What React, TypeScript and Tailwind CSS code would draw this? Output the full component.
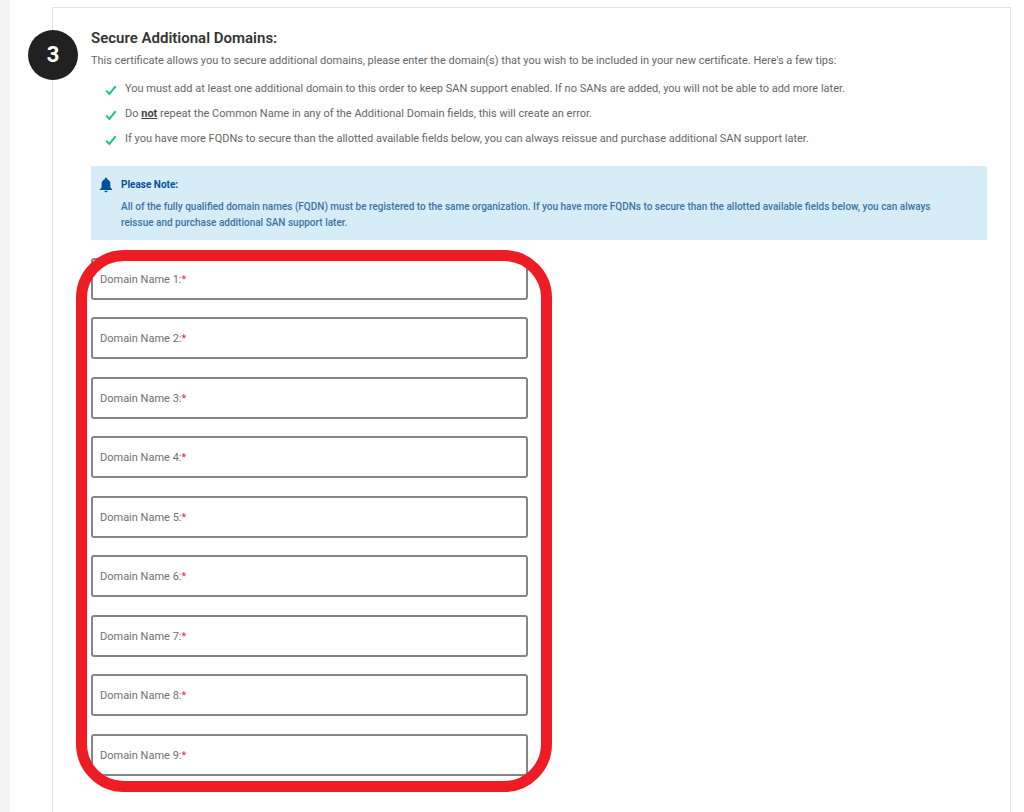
import { useState } from 'react';
import type { ReactNode } from 'react';

const DOMAIN_COUNT = 9;

function CheckIcon() {
  return (
    <svg viewBox="0 0 12 12" className="mt-[3px] h-3 w-3 shrink-0" fill="none" aria-hidden="true">
      <path d="M1.200 6.600 4.400 9.900 10.700 2.200" stroke="#1fbf92" strokeWidth="2" />
    </svg>
  );
}

function BellIcon() {
  return (
    <svg viewBox="0 0 14 16" className="h-4 w-[14px] shrink-0" fill="#07509c" aria-hidden="true">
      <path d="M7 .8c.8 0 1.300.5 1.300 1.300v.4c1.900.5 3.100 2.200 3.100 4.300v3.600l1.700 1.900v.8H.9v-.8l1.700-1.900V6.800c0-2.100 1.200-3.800 3.100-4.300v-.4C5.700 1.300 6.200.8 7 .8Z" />
      <path d="M5.400 13.700h3.200c0 .9-.7 1.600-1.600 1.600s-1.600-.7-1.600-1.600Z" />
    </svg>
  );
}

function Tip({ children }: { children: ReactNode }) {
  return (
    <li className="flex items-start gap-2">
      <CheckIcon />
      <span>{children}</span>
    </li>
  );
}

export default function App() {
  const [domains, setDomains] = useState<string[]>(Array(DOMAIN_COUNT).fill(''));

  function updateDomain(index: number, value: string) {
    setDomains(domains.map((d, i) => (i === index ? value : d)));
  }

  return (
    <main className="flex min-h-screen border-l-[10px] border-[#f3f3f3] bg-white pt-[7px] pr-[13px] pl-[42px] font-['Roboto',sans-serif] text-[11px] leading-4 text-[#666666]">
      <section className="relative flex-1 border border-b-0 border-[#e4e4e4] pt-[21px] pr-[23px] pb-9 pl-[38px]">
        {/* Step number */}
        <div className="absolute top-[22px] -left-[25px] flex h-[50px] w-[50px] items-center justify-center rounded-full bg-[#212121] text-[22px] font-bold text-white">
          3
        </div>

        <h2 className="text-[15px] leading-[18px] font-semibold text-[#333333]">Secure Additional Domains:</h2>
        <p className="mt-[6px]">
          This certificate allows you to secure additional domains, please enter the domain(s) that you wish to be included in your new certificate. Here's a few tips:
        </p>

        <ul className="mt-3 flex flex-col gap-[9px] pl-[14px]">
          <Tip>
            You must add at least one additional domain to this order to keep SAN support enabled. If no SANs are added, you will not be able to add more later.
          </Tip>
          <Tip>
            Do <b className="text-[#444444] underline">not</b> repeat the Common Name in any of the Additional Domain fields, this will create an error.
          </Tip>
          <Tip>
            If you have more FQDNs to secure than the allotted available fields below, you can always reissue and purchase additional SAN support later.
          </Tip>
        </ul>

        {/* Note */}
        <div className="mt-[19px] flex gap-2 bg-[#d6edf8] pt-[11px] pr-7 pb-[9px] pl-2 text-[10px] text-[#3c74a4]">
          <BellIcon />
          <div>
            <h3 className="font-bold text-[#07509c]">Please Note:</h3>
            <p className="mt-[6px] font-medium">
              All of the fully qualified domain names (FQDN) must be registered to the same organization. If you have more FQDNs to secure than the allotted available fields below, you can always reissue and purchase additional SAN support later.
            </p>
          </div>
        </div>

        {/* Domain fields */}
        <form className="relative mt-[18px] w-full max-w-[437px]">
          {domains.map((domain, i) => (
            <div key={i} className="relative odd:mb-[17px] even:mb-[18px]">
              <input
                id={`domain-${i + 1}`}
                type="text"
                required
                value={domain}
                onChange={(e) => updateDomain(i, e.target.value)}
                className="peer block h-[42px] w-full rounded-[3px] border-2 border-[#858585] bg-white px-2 text-[#333333] focus:outline-none"
              />
              <label
                htmlFor={`domain-${i + 1}`}
                className="pointer-events-none absolute top-[14px] left-[9px] text-[#707070] peer-valid:hidden"
              >
                Domain Name {i + 1}:<span className="text-[#e0313f]">*</span>
              </label>
            </div>
          ))}
          {/* Red outline round the whole group */}
          <div className="pointer-events-none absolute -top-2 -right-6 -bottom-4 -left-[15px] rounded-[48px] border-[11px] border-[#ee1c24]" />
        </form>
      </section>
    </main>
  );
}
